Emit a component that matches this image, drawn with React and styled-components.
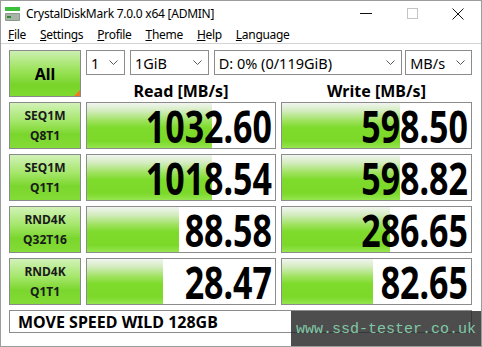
import styled, { createGlobalStyle } from "styled-components";

const GlobalStyle = createGlobalStyle`
  html, body {
    margin: 0;
    padding: 0;
    background: #ffffff;
  }
  * {
    box-sizing: border-box;
  }
`;

const Window = styled.div`
  position: relative;
  width: 482px;
  height: 347px;
  display: flex;
  flex-direction: column;
  background: #ffffff;
  border: 1px solid #9c9c9c;
  font-family: "Noto Sans", "Open Sans", sans-serif;
  color: #000;
  overflow: hidden;
`;

const TitleBar = styled.div`
  height: 25px;
  display: flex;
  align-items: center;
  padding-left: 3px;
`;

const Title = styled.div`
  font-size: 12px;
  margin-left: 5px;
  flex: 1;
  letter-spacing: -0.25px;
`;

const WinButton = styled.div`
  width: 46px;
  height: 25px;
  display: flex;
  align-items: center;
  justify-content: center;
`;

const MenuBar = styled.div`
  height: 22px;
  display: flex;
  align-items: center;
  gap: 14px;
  padding-left: 7px;
  font-size: 12px;
`;

const MenuItem = styled.span`
  letter-spacing: -0.3px;
  &::first-letter {
    text-decoration: underline;
  }
`;

const Client = styled.div`
  flex: 1;
  border-top: 1px solid #d4d4d4;
  padding: 6px 0 0 8px;
  display: grid;
  grid-template-columns: 72px 190px 191px;
  grid-auto-rows: 47px;
  column-gap: 5px;
  row-gap: 5px;
  align-content: start;
`;

const AllButton = styled.div`
  position: relative;
  border: 1px solid #8a8a8a;
  background: linear-gradient(to bottom, #cbefb0 0%, #9fe460 40%, #78d42a 75%, #80da30 100%);
  display: flex;
  align-items: center;
  justify-content: center;
  font-weight: 700;
  font-size: 16px;
  &::after {
    content: "";
    position: absolute;
    right: 0;
    bottom: 0;
    border-style: solid;
    border-width: 0 0 6px 6px;
    border-color: transparent transparent #f07a20 transparent;
  }
`;

const TopArea = styled.div`
  grid-column: 2 / 4;
  display: grid;
  grid-template-columns: 190px 191px;
  column-gap: 5px;
  grid-template-rows: 25px 1fr;
`;

const Selects = styled.div`
  grid-column: 1 / 3;
  display: flex;
  gap: 5px;
`;

const Select = styled.div`
  width: ${(p) => p.w}px;
  margin-left: ${(p) => p.ml || 0}px;
  height: 25px;
  border: 1px solid #8c8c8c;
  background: #fff;
  display: flex;
  align-items: center;
  justify-content: space-between;
  padding: 0 6px 0 4px;
  font-size: 14.5px;
`;

const Header = styled.div`
  display: flex;
  align-items: center;
  justify-content: center;
  font-weight: 700;
  font-size: 16px;
  line-height: 18px;
  padding-top: 7px;
`;

const Label = styled.div`
  border: 1px solid #8a8a8a;
  background: linear-gradient(to bottom, #d2f2b8 0%, #a4e66a 40%, #7ad62c 70%, #84dc36 100%);
  display: flex;
  flex-direction: column;
  align-items: center;
  justify-content: center;
  font-weight: 700;
  font-size: 12px;
  line-height: 20px;
  color: #1a1a1a;
`;

const ValueBox = styled.div`
  position: relative;
  border: 1px solid #8c8c8c;
  background: #fff;
  display: flex;
  align-items: center;
  justify-content: flex-end;
  padding-right: 3px;
`;

const Bar = styled.div`
  position: absolute;
  left: 0;
  top: 0;
  bottom: 0;
  background: linear-gradient(
    to bottom,
    #f2f5f0 0%,
    #d2ecbd 18%,
    #9de25c 40%,
    #7edb2c 55%,
    #7cd92a 85%,
    #96e650 100%
  );
`;

const Value = styled.span`
  position: relative;
  font-weight: 700;
  font-size: 34px;
  display: inline-block;
  transform: scaleY(1.3);
  line-height: 30px;
`;

const NameBar = styled.div`
  grid-column: 1 / 4;
  height: 23px;
  border: 1px solid #8c8c8c;
  display: flex;
  align-items: center;
  padding-left: 8px;
  font-weight: 700;
  font-size: 16px;
`;

const Watermark = styled.div`
  position: absolute;
  right: 0;
  bottom: 0;
  width: 190px;
  height: 35px;
  background: rgba(38, 38, 38, 0.82);
  display: flex;
  align-items: center;
  padding-left: 5px;
  padding-top: 2px;
  font-family: "Liberation Mono", "DejaVu Sans Mono", monospace;
  font-size: 15px;
  color: #80c8a6;
`;

const Chevron = () => (
  <svg width="9" height="6" viewBox="0 0 9 6">
    <path d="M0.5 0.5 L4.5 4.5 L8.5 0.5" fill="none" stroke="#5a5a5a" strokeWidth="1" />
  </svg>
);

const AppIcon = () => (
  <svg width="17" height="16" viewBox="0 0 17 16">
    <rect x="1" y="1" width="15" height="4" fill="#3cc03c" />
    <rect x="1" y="7" width="15" height="8" rx="1" fill="#8a9a8a" />
    <rect x="2" y="8" width="13" height="6" fill="#a8b4a8" />
    <rect x="3" y="10" width="4" height="2" fill="#2e8a2e" />
  </svg>
);

const rows = [
  { l1: "SEQ1M", l2: "Q8T1", r: "1032.60", rf: 0.667, w: "598.50", wf: 0.626 },
  { l1: "SEQ1M", l2: "Q1T1", r: "1018.54", rf: 0.667, w: "598.82", wf: 0.626 },
  { l1: "RND4K", l2: "Q32T16", r: "88.58", rf: 0.487, w: "286.65", wf: 0.574 },
  { l1: "RND4K", l2: "Q1T1", r: "28.47", rf: 0.402, w: "82.65", wf: 0.484 },
];

function RowCells({ row }) {
  return (
    <>
      <Label>
        <span>{row.l1}</span>
        <span>{row.l2}</span>
      </Label>
      <ValueBox>
        <Bar style={{ width: `${row.rf * 100}%` }} />
        <Value>{row.r}</Value>
      </ValueBox>
      <ValueBox>
        <Bar style={{ width: `${row.wf * 100}%` }} />
        <Value>{row.w}</Value>
      </ValueBox>
    </>
  );
}

export default function App() {
  return (
    <>
      <GlobalStyle />
      <Window>
        <TitleBar>
          <AppIcon />
          <Title>CrystalDiskMark 7.0.0 x64 [ADMIN]</Title>
          <WinButton>
            <svg width="12" height="2" viewBox="0 0 12 2">
              <rect x="0" y="0" width="12" height="1" fill="#111" />
            </svg>
          </WinButton>
          <WinButton>
            <svg width="11" height="11" viewBox="0 0 11 11">
              <rect x="0.5" y="0.5" width="10" height="10" fill="none" stroke="#c4c4c4" />
            </svg>
          </WinButton>
          <WinButton>
            <svg width="12" height="12" viewBox="0 0 12 12">
              <path d="M0.5 0.5 L11.5 11.5 M11.5 0.5 L0.5 11.5" stroke="#111" strokeWidth="1" />
            </svg>
          </WinButton>
        </TitleBar>
        <MenuBar>
          <MenuItem>File</MenuItem>
          <MenuItem>Settings</MenuItem>
          <MenuItem>Profile</MenuItem>
          <MenuItem>Theme</MenuItem>
          <MenuItem>Help</MenuItem>
          <MenuItem>Language</MenuItem>
        </MenuBar>
        <Client>
          <AllButton>All</AllButton>
          <TopArea>
            <Selects>
              <Select w={39}>
                1<Chevron />
              </Select>
              <Select w={79}>
                1GiB<Chevron />
              </Select>
              <Select w={189}>
                D: 0% (0/119GiB)<Chevron />
              </Select>
              <Select w={67} ml={-2}>
                MB/s<Chevron />
              </Select>
            </Selects>
            <Header>Read [MB/s]</Header>
            <Header>Write [MB/s]</Header>
          </TopArea>
          {rows.map((row, i) => (
            <RowCells key={i} row={row} />
          ))}
          <NameBar>MOVE SPEED WILD 128GB</NameBar>
        </Client>
        <Watermark>www.ssd-tester.co.uk</Watermark>
      </Window>
    </>
  );
}
